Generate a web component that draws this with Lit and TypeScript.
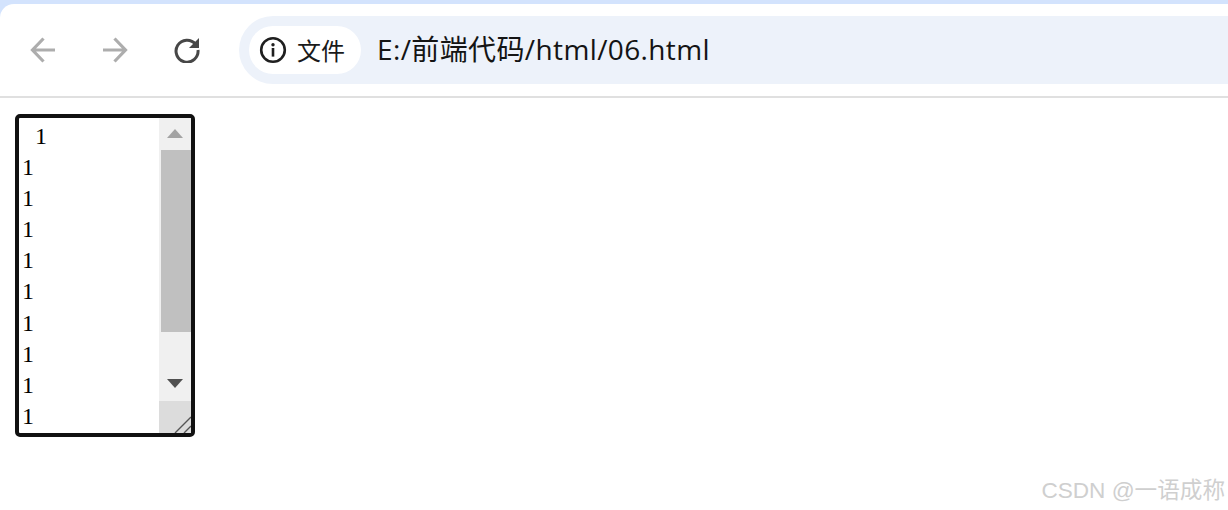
import { LitElement, html, css } from "lit";
import { customElement } from "lit/decorators.js";

@customElement("app-root")
export class AppRoot extends LitElement {
  static styles = css`
    :host { display: block; width: 1228px; height: 510px; background: #fff; overflow: hidden; position: relative; }
    .chrome { background: #d3e3fd; padding-top: 4px; }
    .toolbar { height: 92px; background: #fff; border-top-left-radius: 14px; display: flex; align-items: center; box-sizing: border-box; padding: 0 0 0 19px; }
    .nav { width: 48px; height: 48px; display: flex; align-items: center; justify-content: center; flex: none; }
    .nav + .nav { margin-left: 24px; }
    .omni { margin-left: 28px; flex: 1; height: 68px; background: #edf2fa; border-radius: 34px 0 0 34px; display: flex; align-items: center; padding-left: 10px; }
    .chip { width: 112px; height: 48px; background: #fff; border-radius: 24px; display: flex; align-items: center; box-sizing: border-box; padding-left: 10px; gap: 10px; flex: none; }
    .chip span { font: 24px "Noto Sans CJK SC", sans-serif; color: #1a1a1a; line-height: 48px; }
    .url { margin-left: 16px; padding-bottom: 4px; font: 28px "Open Sans", "Noto Sans CJK SC", sans-serif; letter-spacing: 0.38px; color: #141414; white-space: nowrap; }
    .rule { height: 2px; background: #e0e0e0; }
    .content { padding: 16px 0 0 15px; }
    .box { width: 180px; height: 323px; box-sizing: border-box; border: 4px solid #111; border-radius: 5px; display: flex; overflow: hidden; }
    .text { flex: 1; padding: 3px 0 0 3px; font: 24px/31.1px "Liberation Serif", serif; color: #000; overflow: hidden; }
    .text div:first-child { padding-left: 13px; }
    .bar { width: 32px; flex: none; display: flex; flex-direction: column; background: #f0f0f0; }
    .btn { display: flex; align-items: center; justify-content: center; flex: none; }
    .btn.up { padding-bottom: 2px; height: 30px; }
    .btn.down { padding-bottom: 4px; height: 28px; }
    .thumb { height: 182px; margin-left: 2px; background: #c0c0c0; flex: none; }
    .gap { flex: 1; }
    .corner { height: 32px; flex: none; background: #dcdcdc; }
    .corner svg, .btn svg, .nav svg, .chip svg { display: block; }
    .mark { position: absolute; right: 3px; bottom: 5px; font: 22.6px "Liberation Sans", "Noto Sans CJK SC", sans-serif; color: #cfcfcf; white-space: nowrap; }
  `;
  render() {
    const lines = Array.from({ length: 10 }, () => html`<div>1</div>`);
    return html`
      <div class="chrome">
        <div class="toolbar">
          <div class="nav">
            <svg width="26" height="26" viewBox="0 0 26 26" fill="none" stroke="#adadad" stroke-width="3.2"><path d="M25 13H3M13.5 1.5 2.5 13l11 11.5"/></svg>
          </div>
          <div class="nav">
            <svg width="26" height="26" viewBox="0 0 26 26" fill="none" stroke="#adadad" stroke-width="3.2"><path d="M1 13h22M12.5 1.5 23.5 13l-11 11.5"/></svg>
          </div>
          <div class="nav">
            <svg width="26" height="26" viewBox="0 0 26 26" fill="none"><path d="M21.6 7.2A11 11 0 1 0 24 13" stroke="#474747" stroke-width="3"/><path d="M25 1v10H15z" fill="#474747"/></svg>
          </div>
          <div class="omni">
            <div class="chip">
              <svg width="28" height="28" viewBox="0 0 28 28" fill="none"><circle cx="14" cy="14" r="11.8" stroke="#1f1f1f" stroke-width="2.6"/><circle cx="14" cy="8.8" r="1.7" fill="#1f1f1f"/><rect x="12.7" y="12" width="2.6" height="8.6" fill="#1f1f1f"/></svg>
              <span>文件</span>
            </div>
            <div class="url">E:/前端代码/html/06.html</div>
          </div>
        </div>
        <div class="rule"></div>
      </div>
      <div class="content">
        <div class="box">
          <div class="text">${lines}</div>
          <div class="bar">
            <div class="btn up"><svg width="16" height="9" viewBox="0 0 16 9"><path d="M8 0 16 9H0z" fill="#a3a3a3"/></svg></div>
            <div class="thumb"></div>
            <div class="gap"></div>
            <div class="btn down"><svg width="16" height="9" viewBox="0 0 16 9"><path d="M0 0H16L8 9z" fill="#505050"/></svg></div>
            <div class="corner">
              <svg width="32" height="32" viewBox="0 0 32 32" fill="none" stroke="#555" stroke-width="1.4"><path d="M16 32 32 16M25 32l7-7"/></svg>
            </div>
          </div>
        </div>
      </div>
      <div class="mark">CSDN @一语成称</div>
    `;
  }
}
